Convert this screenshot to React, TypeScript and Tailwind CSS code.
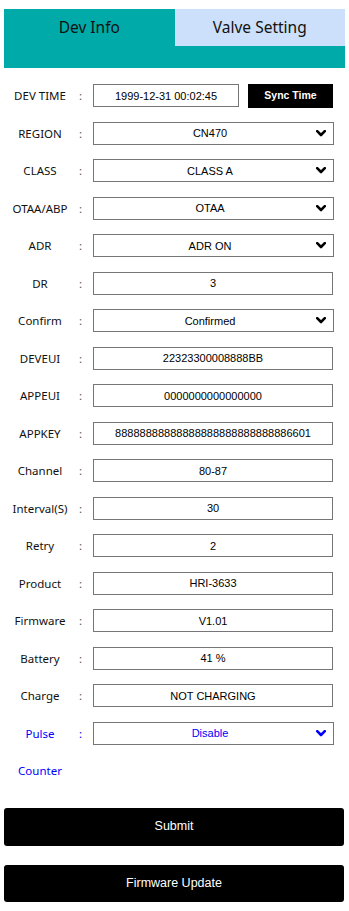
import React from 'react';

type Row = {
  label: string;
  value: string;
  kind: 'text' | 'select';
  blue?: boolean;
};

const ROWS: Row[] = [
  { label: 'REGION', value: 'CN470', kind: 'select' },
  { label: 'CLASS', value: 'CLASS A', kind: 'select' },
  { label: 'OTAA/ABP', value: 'OTAA', kind: 'select' },
  { label: 'ADR', value: 'ADR ON', kind: 'select' },
  { label: 'DR', value: '3', kind: 'text' },
  { label: 'Confirm', value: 'Confirmed', kind: 'select' },
  { label: 'DEVEUI', value: '22323300008888BB', kind: 'text' },
  { label: 'APPEUI', value: '0000000000000000', kind: 'text' },
  { label: 'APPKEY', value: '88888888888888888888888888886601', kind: 'text' },
  { label: 'Channel', value: '80-87', kind: 'text' },
  { label: 'Interval(S)', value: '30', kind: 'text' },
  { label: 'Retry', value: '2', kind: 'text' },
  { label: 'Product', value: 'HRI-3633', kind: 'text' },
  { label: 'Firmware', value: 'V1.01', kind: 'text' },
  { label: 'Battery', value: '41 %', kind: 'text' },
  { label: 'Charge', value: 'NOT CHARGING', kind: 'text' },
  { label: 'Pulse', value: 'Disable', kind: 'select', blue: true },
];

const LABEL_FONT = "font-['Noto_Sans',sans-serif]";
const VALUE_FONT = "font-['Liberation_Sans',Arial,sans-serif]";

function Chevron({ color }: { color: string }) {
  return (
    <svg width="10" height="7" viewBox="0 0 10 7" className="shrink-0">
      <polyline points="1.2,1.2 5,5 8.8,1.2" fill="none" stroke={color} strokeWidth="2.6" strokeLinecap="round" strokeLinejoin="round" />
    </svg>
  );
}

function FieldRow({ row }: { row: Row }) {
  const tone = row.blue ? 'text-[#0000ff]' : 'text-black';
  return (
    <div className="h-[37.5px] flex items-center">
      <div className={`w-[72px] text-center text-[11.5px] ${LABEL_FONT} ${row.blue ? 'text-[#0000ff]' : 'text-[#111]'}`}>
        {row.label}
      </div>
      <div className={`w-[17px] pl-[3px] text-[11.5px] ${LABEL_FONT} ${row.blue ? 'text-[#0000ff]' : 'text-[#555]'}`}>:</div>
      {row.kind === 'select' ? (
        <div className={`w-[241px] h-[23px] border border-[#767676] flex items-center pr-[7px] ${VALUE_FONT} text-[11px] ${tone}`}>
          <span className="flex-1 text-center pl-[10px]">{row.value}</span>
          <Chevron color={row.blue ? '#0000ff' : '#000'} />
        </div>
      ) : (
        <div className={`w-[240px] h-[23px] border border-[#767676] flex items-center justify-center ${VALUE_FONT} text-[11px] ${tone}`}>
          {row.value}
        </div>
      )}
    </div>
  );
}

export default function App() {
  return (
    <div className="w-[349px] min-h-[911px] bg-white px-[4px] pt-[9px]">
      {/* Tabs header */}
      <div className="h-[59px] bg-[#00aaa8]">
        <div className={`grid grid-cols-2 h-[37px] text-[15.5px] ${LABEL_FONT} text-[#111]`}>
          <div className="flex items-center justify-center">Dev Info</div>
          <div className="flex items-center justify-center bg-[#cce0fb]">Valve Setting</div>
        </div>
      </div>

      {/* Fields */}
      <div className="mt-[9px]">
        <div className="h-[37.5px] flex items-center">
          <div className={`w-[72px] text-center text-[11.5px] ${LABEL_FONT} text-[#111]`}>DEV TIME</div>
          <div className={`w-[17px] pl-[3px] text-[11.5px] ${LABEL_FONT} text-[#555]`}>:</div>
          <div className={`w-[146px] h-[23px] border border-[#767676] flex items-center justify-center ${VALUE_FONT} text-[11px] text-black`}>
            1999-12-31 00:02:45
          </div>
          <button className={`ml-[9px] w-[85px] h-[24px] bg-black text-white font-bold text-[10.5px] ${VALUE_FONT}`}>
            Sync Time
          </button>
        </div>
        {ROWS.map(r => (
          <FieldRow key={r.label} row={r} />
        ))}
        <div className="h-[37.5px] flex items-center">
          <div className={`w-[72px] text-center text-[11.5px] ${LABEL_FONT} text-[#0000ff]`}>Counter</div>
        </div>
      </div>

      {/* Actions */}
      <div className="w-[340px] mt-[18px] flex flex-col gap-[19px]">
        <button className={`h-[38px] rounded-[3px] bg-black text-white text-[12.5px] ${VALUE_FONT}`}>Submit</button>
        <button className={`h-[37px] rounded-[3px] bg-black text-white text-[12.5px] ${VALUE_FONT}`}>Firmware Update</button>
      </div>
    </div>
  );
}
